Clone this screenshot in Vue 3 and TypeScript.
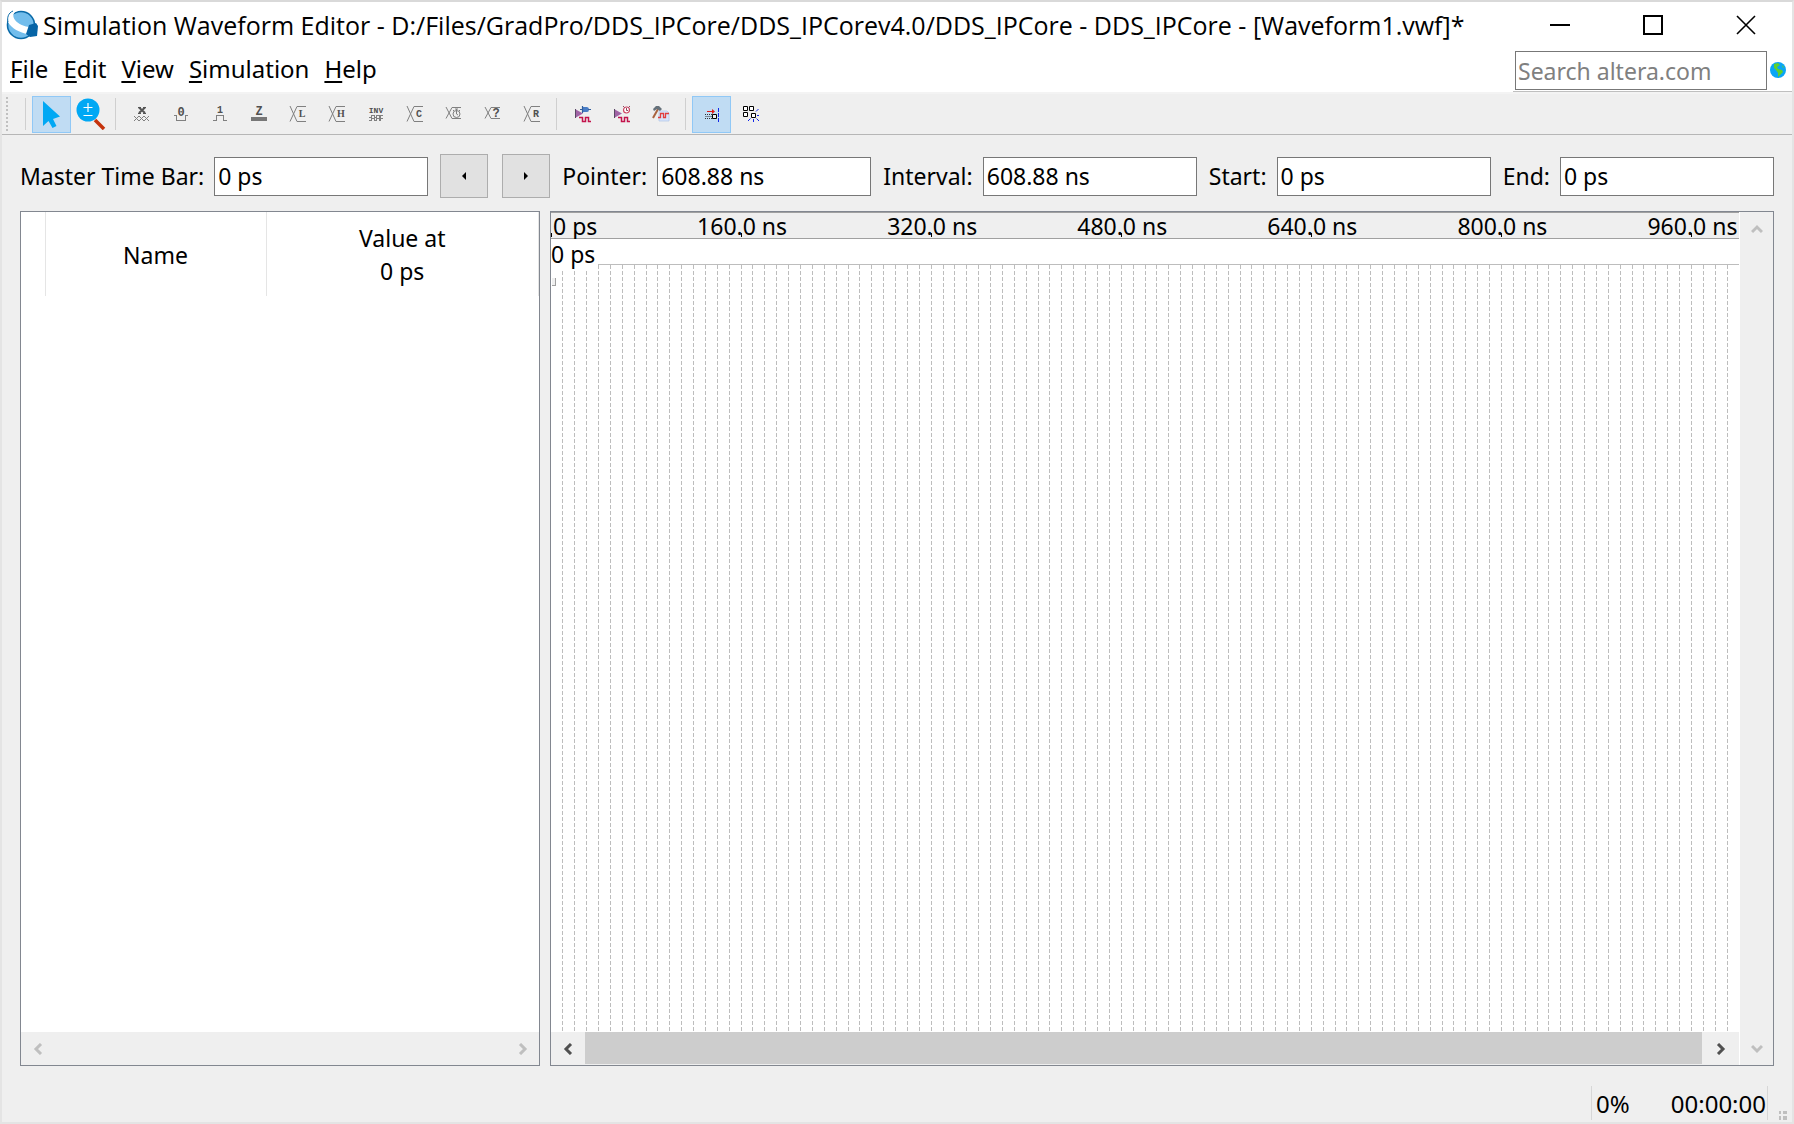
<script setup lang="ts">
import { reactive, ref } from 'vue'

interface MenuEntry {
  key: string
  rest: string
}

const menus: MenuEntry[] = [
  { key: 'F', rest: 'ile' },
  { key: 'E', rest: 'dit' },
  { key: 'V', rest: 'iew' },
  { key: 'S', rest: 'imulation' },
  { key: 'H', rest: 'elp' },
]

const search = ref('')
const times = reactive({
  master: '0 ps',
  pointer: '608.88 ns',
  interval: '608.88 ns',
  start: '0 ps',
  end: '0 ps',
})

const busValues = [
  { name: 'Weak low', glyph: 'L' },
  { name: 'Weak high', glyph: 'H' },
]

// The visible span is 1000 ns; each grid column is 10 ns wide.
const marks = [160, 320, 480, 640, 800, 960].map((ns) => ({
  text: `${ns}.0 ns`,
  left: `${ns / 10}%`,
}))
const gridLines = Array.from({ length: 99 }, (_, i) => `${i + 1}%`)
</script>

<template>
  <div class="window">
    <header class="titlebar">
      <svg class="logo" viewBox="0 0 32 32" aria-hidden="true">
        <circle cx="15" cy="16" r="13.5" fill="#72bdec" stroke="#0a6aa8" stroke-width="1.6" />
        <path d="M2 6C4 3 8 1 12 2C7 3 6 7 9 11C12 15 19 18 24 18L22 25C14 24 5 19 2 13Z" fill="#fff" />
        <path d="M2 13C1 9 2 4 7 2" fill="none" stroke="#0a6aa8" stroke-width="1" />
        <path d="M23 16L30 14L32 17L31 27L24 28L20 25Z" fill="#0664a6" />
      </svg>
      <h1>Simulation Waveform Editor - D:/Files/GradPro/DDS_IPCore/DDS_IPCorev4.0/DDS_IPCore - DDS_IPCore - [Waveform1.vwf]*</h1>
      <div class="caption">
        <button type="button" aria-label="Minimize">
          <svg viewBox="0 0 20 20"><path d="M0 10H20" stroke-width="2" /></svg>
        </button>
        <button type="button" aria-label="Maximize">
          <svg viewBox="0 0 20 20"><path d="M1 1H19V19H1Z" stroke-width="2" /></svg>
        </button>
        <button type="button" aria-label="Close">
          <svg viewBox="0 0 20 20"><path d="M1 1L19 19M19 1L1 19" stroke-width="1.6" /></svg>
        </button>
      </div>
    </header>

    <div class="menubar">
      <nav class="menus">
        <button v-for="m in menus" :key="m.key" type="button"><u>{{ m.key }}</u>{{ m.rest }}</button>
      </nav>
      <div class="search">
        <input v-model="search" type="text" placeholder="Search altera.com" aria-label="Search altera.com" />
        <button type="button" aria-label="Search the web">
          <svg viewBox="0 0 16 16">
            <circle cx="8" cy="8" r="8" fill="#0aa5f5" />
            <path d="M4 2L8 1L10 3L7 5L8 7L12 8L13 10L10 13L8 15L8 11L6 8L4 6Z" fill="#5fd02c" />
            <path d="M12 3L14 5L13 6Z" fill="#5fd02c" />
          </svg>
        </button>
      </div>
    </div>

    <div class="toolbar" role="toolbar" aria-label="Waveform tools">
      <span class="handle"></span>
      <span class="sep"></span>
      <button type="button" class="tool active" aria-label="Selection tool">
        <svg class="big" viewBox="0 0 32 32">
          <path d="M7 3V28L12.500 23L16.500 30L20.500 28L17 21L24 18.500Z" fill="#00a8f4" />
        </svg>
      </button>
      <button type="button" class="tool" aria-label="Zoom tool">
        <svg class="big" viewBox="0 0 32 32">
          <path d="M20 22L29 31" stroke="#c5330c" stroke-width="3.500" />
          <circle cx="13" cy="12" r="11.500" fill="#00a8f4" />
          <path d="M8.500 9.500H17.500M13 5V14M8.500 17.500H17.500" stroke="#fff" stroke-width="1.200" />
        </svg>
      </button>
      <span class="sep"></span>

      <button type="button" class="tool" aria-label="Forcing unknown">
        <svg class="small" viewBox="0 0 16 16">
          <path class="heavy" d="M5 1.500L11 7M11 1.500L5 7" />
          <path class="heavy-serif" d="M4 1.500H7M9 1.500H12M4 7.500H7M9 7.500H12" />
          <path class="soft" d="M0 10L5 15L10 10L15 15M0 15L5 10L10 15L15 10" />
        </svg>
      </button>
      <button type="button" class="tool" aria-label="Forcing low">
        <svg class="small" viewBox="0 0 16 16">
          <text class="digit" x="8" y="10">0</text>
          <path class="line" d="M1 9.500H3.500V14.500H12.500V9.500H15" />
        </svg>
      </button>
      <button type="button" class="tool" aria-label="Forcing high">
        <svg class="small" viewBox="0 0 16 16">
          <text x="8" y="7">1</text>
          <path class="line" d="M1 14.500H4.500V9.500H11.500V14.500H15" />
        </svg>
      </button>
      <button type="button" class="tool" aria-label="High impedance">
        <svg class="small" viewBox="0 0 16 16">
          <text class="digit" x="8" y="9">Z</text>
          <path d="M0 11H16V15H0Z" fill="#777" />
        </svg>
      </button>
      <button v-for="b in busValues" :key="b.glyph" type="button" class="tool" :aria-label="b.name">
        <svg class="small" viewBox="0 0 16 16">
          <path class="soft" d="M0 0L7 15.500H16M0 15.500L7 0.500H16" />
          <text class="thin" x="12" y="11">{{ b.glyph }}</text>
        </svg>
      </button>
      <button type="button" class="tool" aria-label="Invert">
        <svg class="small" viewBox="0 0 16 16">
          <text class="tiny" x="8" y="7">INV</text>
          <path class="line" d="M1 11.500H3.500V9.500H6.500V11.500H8.500V9.500H11.500V11.500H12.500V9.500H15M1 14.500H3.500V12.500H6.500V14.500H8.500V12.500H11.500V14.500H12.500V12.500H15" />
        </svg>
      </button>
      <button type="button" class="tool" aria-label="Count value">
        <svg class="small" viewBox="0 0 16 16">
          <path class="soft" d="M0 0L7 15.500H16M0 15.500L7 0.500H16" />
          <text x="12" y="11">C</text>
        </svg>
      </button>
      <button type="button" class="tool" aria-label="Overwrite clock">
        <svg class="small" viewBox="0 0 16 16">
          <path class="soft" d="M0 1L6 12.500H15M0 12.500L6 1.500H15" />
          <circle class="soft" cx="10.500" cy="8" r="3.500" />
          <path class="soft" d="M9 3H12M10.500 3V8L12 9M7 4L8 5M14 4L13 5" />
        </svg>
      </button>
      <button type="button" class="tool" aria-label="Arbitrary value">
        <svg class="small" viewBox="0 0 16 16">
          <path class="soft" d="M0 1L6 12.500H15M0 12.500L6 1.500H15" />
          <text class="digit" x="11" y="11">?</text>
        </svg>
      </button>
      <button type="button" class="tool" aria-label="Random values">
        <svg class="small" viewBox="0 0 16 16">
          <path class="soft" d="M0 0L7 15.500H16M0 15.500L7 0.500H16" />
          <text x="12" y="11">R</text>
        </svg>
      </button>
      <span class="sep"></span>

      <button type="button" class="tool" aria-label="Run functional simulation">
        <svg class="small" viewBox="0 0 16 16">
          <path d="M0 3L8 7.500L0 12Z" fill="#a063a5" />
          <path d="M0.500 3V12" stroke="#594864" />
          <path d="M4 11.500H7.500V15.500H10.500V11.500H13.500V15.500H16" fill="none" stroke="#c3134b" stroke-width="1.500" />
          <path d="M8 1H12Q14 1 14 3.500Q14 6 12 6H8Z" fill="#487cc5" />
          <path d="M5 3.500H8M13 3.500H16M7.500 0V7" stroke="#315f9d" stroke-width="1.200" />
        </svg>
      </button>
      <button type="button" class="tool" aria-label="Run timing simulation">
        <svg class="small" viewBox="0 0 16 16">
          <path d="M0 3L8 7.500L0 12Z" fill="#a063a5" />
          <path d="M0.500 3V12" stroke="#594864" />
          <path d="M4 11.500H7.500V15.500H10.500V11.500H13.500V15.500H16" fill="none" stroke="#c3134b" stroke-width="1.500" />
          <circle cx="12.500" cy="4" r="3" fill="#fff" stroke="#d04563" stroke-width="1.200" />
          <path d="M12.500 2V4.500H14M9 0L10.500 1.500M16 0L14.500 1.500" fill="none" stroke="#8b4960" />
        </svg>
      </button>
      <button type="button" class="tool" aria-label="Generate testbench">
        <svg class="small" viewBox="0 0 16 16">
          <path d="M6 5H14L16 7V15H6Z" fill="#d7e4fa" stroke="#afc5e8" stroke-width=".7" />
          <path d="M5 11.500H7.500V7.500H10.500V11.500H12.500V7.500H16" fill="none" stroke="#e13d3d" stroke-width="1.300" />
          <path d="M5 3L0 12" stroke="#a96440" stroke-width="2" />
          <path d="M0 3L3 0H6L9 3L7 5L4 3L1 5Z" fill="#65717a" />
        </svg>
      </button>
      <span class="sep"></span>

      <button type="button" class="tool active" aria-label="Snap to grid">
        <svg class="small" viewBox="0 0 16 16">
          <path d="M3 5.500H9" stroke="#e01616" />
          <path d="M8 3L11 5.500L8 8Z" fill="#e01616" />
          <path d="M1 8.500H8M1 12.500H8M1.500 10.500H8" stroke="#333" stroke-dasharray="1 1" />
          <path d="M8.500 8.500H12.500V12.500H8.500Z" fill="#eee" stroke="#000" />
          <path d="M14.500 2V16" stroke="#1428e8" stroke-dasharray="4 1" />
        </svg>
      </button>
      <button type="button" class="tool" aria-label="Snap to transition">
        <svg class="small" viewBox="0 0 16 16">
          <path d="M.5 .5H4.500V4.500H.5ZM6.500 .5H10.500V4.500H6.500ZM.5 6.500H4.500V10.500H.5ZM8.500 7.500H12.500V11.500H8.500Z" fill="#fff" stroke="#000" />
          <path d="M13 5.500L15.500 3M14 9.500H16M13.500 12.500L16 15M10.500 13V16M7.500 12.500L5 15" stroke="#1428e8" />
        </svg>
      </button>
    </div>

    <main>
      <form class="timebar" @submit.prevent>
        <label class="first" for="master">Master Time Bar:</label>
        <input id="master" v-model="times.master" type="text" />
        <div class="steps">
          <button type="button" aria-label="Previous transition">
            <svg viewBox="0 0 4 8"><path d="M4 0V8L0 4Z" /></svg>
          </button>
          <button type="button" aria-label="Next transition">
            <svg viewBox="0 0 4 8"><path d="M0 0V8L4 4Z" /></svg>
          </button>
        </div>
        <label for="pointer">Pointer:</label>
        <input id="pointer" v-model="times.pointer" type="text" />
        <label for="interval">Interval:</label>
        <input id="interval" v-model="times.interval" type="text" />
        <label for="start">Start:</label>
        <input id="start" v-model="times.start" type="text" />
        <label for="end">End:</label>
        <input id="end" v-model="times.end" type="text" />
      </form>

      <div class="panes">
        <section class="signals">
          <table>
            <thead>
              <tr>
                <th class="index" aria-label="Type"></th>
                <th class="name">Name</th>
                <th>Value at<br />0 ps</th>
              </tr>
            </thead>
          </table>
          <div class="hscroll disabled">
            <button type="button" aria-label="Scroll left" disabled>
              <svg viewBox="0 0 10 12"><path d="M8 1L3 6L8 11" /></svg>
            </button>
            <button type="button" aria-label="Scroll right" disabled>
              <svg viewBox="0 0 10 12"><path d="M2 1L7 6L2 11" /></svg>
            </button>
          </div>
        </section>

        <section class="waves">
          <div class="canvas">
            <div class="ruler">
              <span class="tick origin"></span>
              <span class="zero">0 ps</span>
              <template v-for="m in marks" :key="m.text">
                <span class="mark" :style="{ left: m.left }">{{ m.text }}</span>
                <span class="tick" :style="{ left: m.left }"></span>
              </template>
            </div>
            <div class="cursor-row"><span>0 ps</span></div>
            <div class="plot">
              <svg class="grid" aria-hidden="true">
                <line v-for="x in gridLines" :key="x" :x1="x" :x2="x" y1="0" y2="100%" />
              </svg>
              <i class="grabber"></i>
            </div>
            <div class="hscroll">
              <button type="button" aria-label="Scroll left">
                <svg viewBox="0 0 10 12"><path d="M8 1L3 6L8 11" /></svg>
              </button>
              <span class="thumb"></span>
              <button type="button" class="end" aria-label="Scroll right">
                <svg viewBox="0 0 10 12"><path d="M2 1L7 6L2 11" /></svg>
              </button>
            </div>
          </div>
          <div class="vscroll">
            <button type="button" aria-label="Scroll up" disabled>
              <svg viewBox="0 0 12 10"><path d="M1 8L6 3L11 8" /></svg>
            </button>
            <button type="button" aria-label="Scroll down" disabled>
              <svg viewBox="0 0 12 10"><path d="M1 2L6 7L11 2" /></svg>
            </button>
          </div>
        </section>
      </div>
    </main>

    <footer class="status">
      <div class="progress">
        <span>0%</span>
        <span>00:00:00</span>
      </div>
      <svg class="grip" viewBox="0 0 8 9" aria-hidden="true">
        <path d="M0 0H2V3H0ZM4 0H8V3H4ZM0 5H2V9H0ZM4 5H8V9H4Z" fill="#bfbfbf" />
      </svg>
    </footer>
  </div>
</template>

<style>
body {
  margin: 0;
}
</style>

<style scoped>
* {
  box-sizing: border-box;
}

.window {
  display: flex;
  flex-direction: column;
  min-height: 100vh;
  border: 2px solid #e4e4e4;
  border-top-color: #d9d9d9;
  background: #efefef;
  color: #000;
  font: 23px/32px 'Noto Sans', 'Open Sans', sans-serif;
}

button,
input {
  margin: 0;
  padding: 0;
  border: 0;
  border-radius: 0;
  background: none;
  color: inherit;
  font: inherit;
}

svg {
  display: block;
}

.titlebar {
  display: flex;
  align-items: center;
  height: 45px;
  padding-left: 4px;
  background: #fff;
}

.logo {
  width: 32px;
  height: 32px;
  margin-right: 5px;
}

h1 {
  flex: 1;
  margin: 0;
  font: 400 25px/36px 'Open Sans', 'Noto Sans', sans-serif;
  white-space: nowrap;
}

.caption {
  display: flex;
}

.caption button {
  display: grid;
  place-items: center;
  width: 93px;
  height: 44px;
}

.caption svg {
  width: 20px;
  height: 20px;
  fill: none;
  stroke: #000;
}

.menubar {
  display: flex;
  justify-content: space-between;
  height: 47px;
  border-bottom: 2px solid #f3f3f3;
  background: #fff;
}

.menus {
  display: flex;
  gap: 15px;
  align-items: center;
  height: 43px;
  padding-left: 8px;
  font-size: 24px;
}

.menus u {
  text-underline-offset: 3px;
  text-decoration-thickness: 2px;
}

.search {
  display: flex;
  align-items: center;
  gap: 3px;
  padding: 3px 6px 1px 2px;
  border-bottom: 1px solid #bfbfbf;
}

.search input {
  width: 252px;
  height: 39px;
  padding: 2px 2px 0;
  border: 1px solid #777;
}

.search input::placeholder {
  color: #808080;
  opacity: 1;
}

.search svg {
  width: 16px;
  height: 16px;
}

.toolbar {
  display: flex;
  align-items: center;
  height: 41px;
  border-bottom: 1px solid #b6b6b6;
}

.handle {
  width: 2px;
  height: 34px;
  margin: 0 12px 0 4px;
  background: repeating-linear-gradient(#c0c0c0 0 2px, transparent 2px 4px);
}

.sep {
  width: 1px;
  height: 32px;
  margin: 0 6px 0 5px;
  background: #cfcfcf;
}

.tool {
  display: grid;
  place-items: center;
  width: 39px;
  height: 37px;
}

.tool.active {
  border: 1px solid #90c8f6;
  background: #c0dcf3;
}

.big {
  width: 32px;
  height: 32px;
}

.small {
  width: 16px;
  height: 16px;
  overflow: visible;
}

.line,
.soft,
.heavy,
.heavy-serif {
  fill: none;
  stroke: #808080;
}

.line {
  shape-rendering: crispEdges;
}

.heavy,
.heavy-serif {
  stroke: #555;
}

.heavy {
  stroke-width: 2px;
}

.small text {
  fill: #505050;
  font: 700 10px 'Liberation Mono', monospace;
  text-anchor: middle;
}

.small .thin {
  font: 700 10px 'Liberation Serif', serif;
}

.small .tiny {
  font-size: 8px;
}

.small .digit {
  font-size: 12px;
}

main {
  display: flex;
  flex: 1;
  flex-direction: column;
  gap: 13px;
  padding: 19px 18px 0;
}

.timebar {
  display: flex;
  align-items: center;
  height: 44px;
}

.timebar label {
  flex: none;
  margin: 0 10px 0 12px;
}

.timebar .first {
  margin-left: 0;
}

.timebar input {
  flex: 1;
  min-width: 0;
  height: 39px;
  padding: 0 3px;
  border: 1px solid #777;
  background: #fff;
}

.steps {
  display: flex;
  gap: 14px;
  margin-left: 12px;
}

.steps button {
  display: grid;
  place-items: center;
  width: 48px;
  height: 44px;
  border: 1px solid #adadad;
  background: #e1e1e1;
}

.steps svg {
  width: 4px;
  height: 8px;
}

.panes {
  display: flex;
  flex: 1;
  gap: 10px;
}

.signals,
.waves {
  border: 1px solid #828790;
  background: #fff;
}

.signals {
  display: flex;
  flex-direction: column;
  justify-content: space-between;
  width: 520px;
}

table {
  width: 100%;
  border-collapse: collapse;
  table-layout: fixed;
}

th {
  height: 84px;
  padding: 2px 0 0;
  border-right: 1px solid #e5e5e5;
  font-weight: 400;
  line-height: 33px;
}

.index {
  width: 24px;
}

.name {
  width: 221px;
}

.waves {
  display: flex;
  flex: 1;
}

.canvas {
  display: flex;
  flex: 1;
  flex-direction: column;
}

.ruler {
  position: relative;
  height: 27px;
  border-top: 1px solid #a0a0a0;
  border-bottom: 1px solid #a0a0a0;
  background: #efefef;
  line-height: 26px;
}

.zero {
  display: block;
  padding-left: 2px;
}

.mark {
  position: absolute;
  top: 0;
  margin-left: 1px;
  transform: translateX(-50%);
  white-space: nowrap;
}

.tick {
  position: absolute;
  bottom: 1px;
  width: 1px;
  height: 4px;
  background: #000;
}

.origin {
  left: 0;
}

.cursor-row {
  position: relative;
  z-index: 1;
  height: 26px;
  border-bottom: 1px solid #bdbdbd;
}

.cursor-row span {
  display: block;
  width: 47px;
  height: 31px;
  background: #fff;
  line-height: 31px;
}

.plot {
  position: relative;
  flex: 1;
}

.grid {
  position: absolute;
  width: 100%;
  height: 100%;
}

.grid line {
  stroke: #bdbdbd;
  stroke-dasharray: 4 2;
  shape-rendering: crispEdges;
}

.grabber {
  position: absolute;
  top: 13px;
  left: 1px;
  width: 4px;
  height: 8px;
  border: solid #a0a0a0;
  border-width: 0 1px 1px 0;
  background: #efefef;
}

.hscroll {
  display: flex;
  justify-content: space-between;
  height: 33px;
  background: #efefef;
}

.hscroll button,
.vscroll button {
  display: grid;
  place-items: center;
  width: 33px;
  height: 33px;
}

.waves .hscroll button {
  width: 34px;
}

.waves .hscroll .end {
  width: 37px;
}

.hscroll svg {
  width: 10px;
  height: 12px;
}

.hscroll path,
.vscroll path {
  fill: none;
  stroke: #505050;
  stroke-width: 3px;
}

.disabled path,
.vscroll path {
  stroke: #bfbfbf;
}

.thumb {
  flex: 1;
  margin-bottom: 1px;
  background: #cdcdcd;
}

.vscroll {
  display: flex;
  flex-direction: column;
  justify-content: space-between;
  border-left: 1px solid #fff;
  background: #efefef;
}

.vscroll svg {
  width: 12px;
  height: 10px;
}

.status {
  display: flex;
  justify-content: flex-end;
  height: 56px;
  padding: 20px 5px 2px;
}

.progress {
  display: flex;
  justify-content: space-between;
  width: 177px;
  padding: 2px 1px 0 4px;
  border: solid #d7d7d7;
  border-width: 0 1px;
  font-size: 24px;
}

.grip {
  align-self: flex-end;
  width: 8px;
  height: 9px;
  margin-left: 11px;
}
</style>
